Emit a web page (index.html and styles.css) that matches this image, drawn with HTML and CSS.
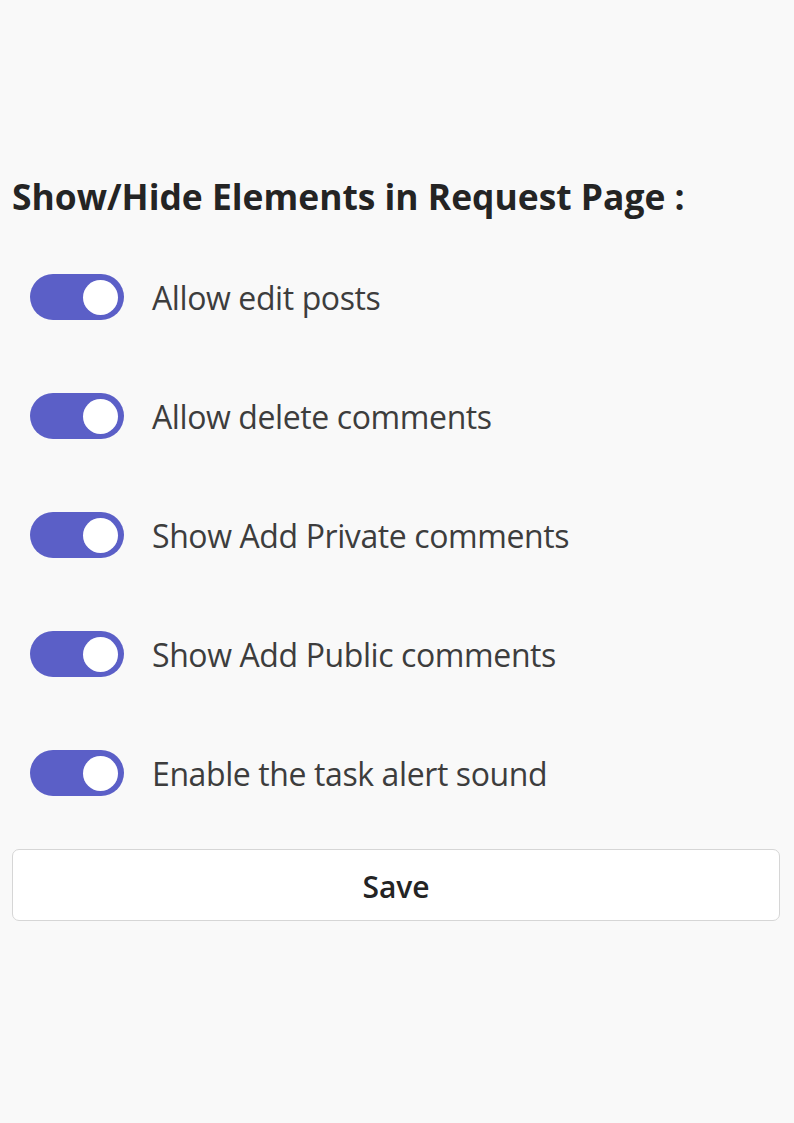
FILE: index.html
```html
<!DOCTYPE html>
<html>
<head>
<meta charset="utf-8">
<link rel="stylesheet" href="styles.css">
</head>
<body>
<div class="page">
  <h2 class="title">Show/Hide Elements in Request Page :</h2>
  <div class="options">
    <div class="row"><span class="toggle on"><span class="knob"></span></span><span class="label">Allow edit posts</span></div>
    <div class="row"><span class="toggle on"><span class="knob"></span></span><span class="label">Allow delete comments</span></div>
    <div class="row"><span class="toggle on"><span class="knob"></span></span><span class="label">Show Add Private comments</span></div>
    <div class="row"><span class="toggle on"><span class="knob"></span></span><span class="label">Show Add Public comments</span></div>
    <div class="row"><span class="toggle on"><span class="knob"></span></span><span class="label">Enable the task alert sound</span></div>
  </div>
  <button class="save">Save</button>
</div>
</body>
</html>
```
FILE: styles.css
```css
html, body {
  margin: 0;
  padding: 0;
  background: #f9f9f9;
}
body {
  font-family: "Open Sans", "Noto Sans", "Liberation Sans", sans-serif;
  color: #242424;
}
.page {
  padding: 170px 14px 0 12px;
}
.title {
  margin: 0;
  font-size: 35.4px;
  font-weight: 700;
  line-height: 52px;
  letter-spacing: 0;
}
.options {
  display: flex;
  flex-direction: column;
  gap: 73px;
  margin-top: 52px;
  padding-left: 18px;
}
.row {
  display: flex;
  align-items: center;
  height: 46px;
}
.toggle {
  width: 94px;
  height: 46px;
  border-radius: 23px;
  background: #5b5fc7;
  display: flex;
  align-items: center;
  justify-content: flex-end;
  padding-right: 6px;
  box-sizing: border-box;
  flex-shrink: 0;
}
.knob {
  width: 35px;
  height: 35px;
  border-radius: 50%;
  background: #fff;
}
.label {
  margin-left: 28px;
  font-size: 32px;
  line-height: 46px;
  color: #3d3d3d;
  letter-spacing: -0.4px;
  position: relative;
  top: 1px;
}
.save {
  display: block;
  width: 768px;
  height: 72px;
  margin-top: 53px;
  background: #fff;
  border: 1px solid #d6d6d6;
  border-radius: 7px;
  font-family: inherit;
  font-size: 30px;
  font-weight: 600;
  color: #242424;
  padding: 2px 0 0;
}
```
